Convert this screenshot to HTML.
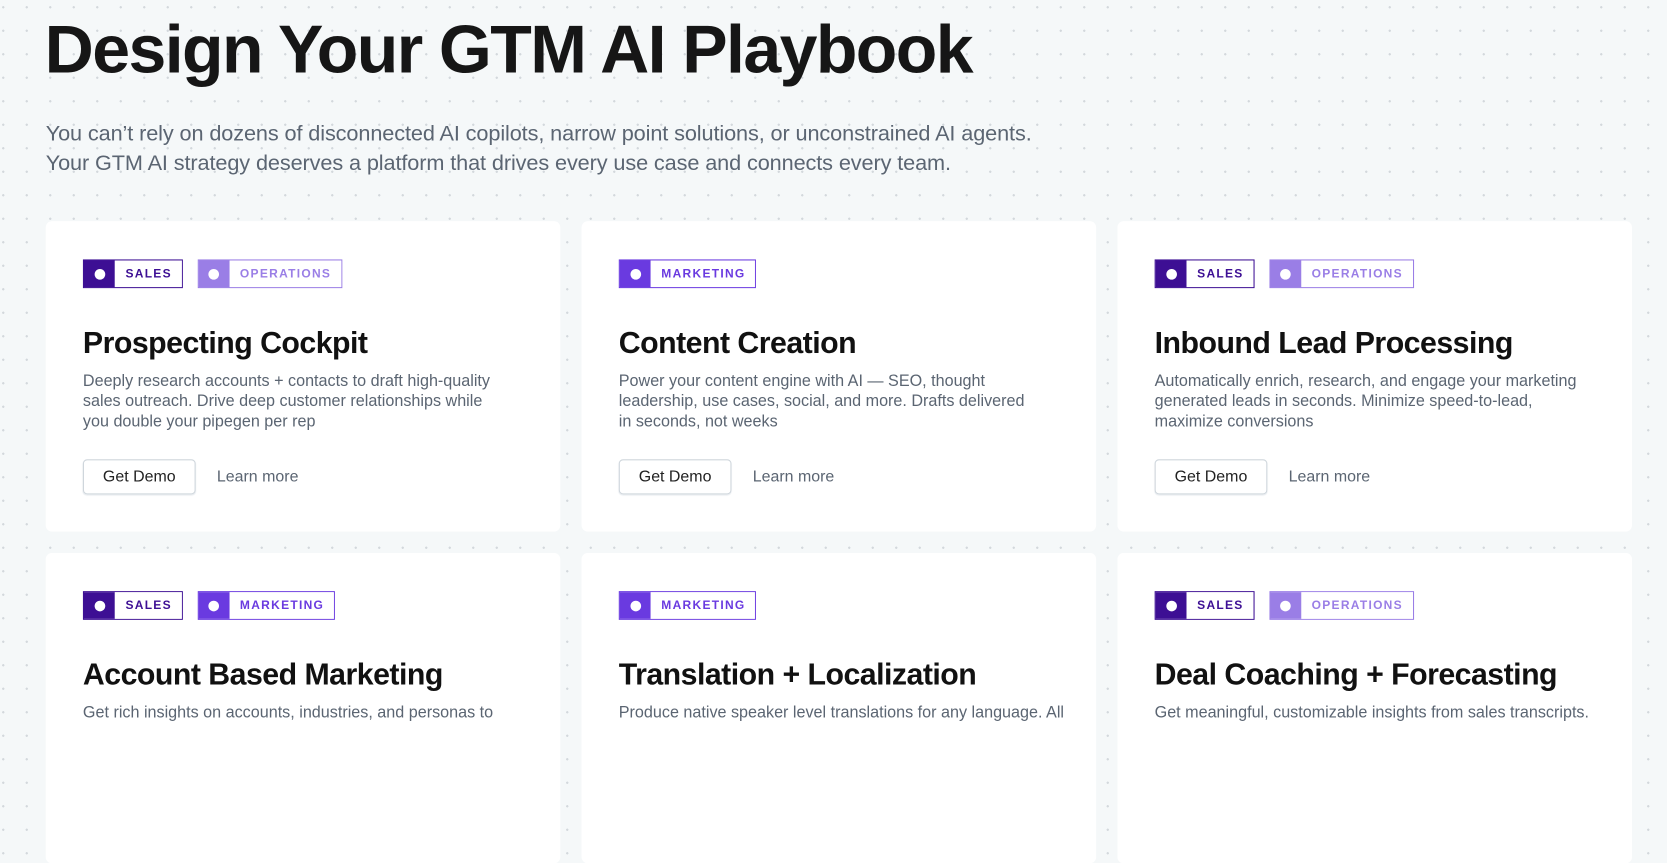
<!DOCTYPE html>
<html><head><meta charset="utf-8"><style>
*{box-sizing:border-box;margin:0;padding:0}
html,body{width:1667px;height:722px;overflow:hidden}
body{background-color:#f5f8f9;background-image:radial-gradient(circle,#d3d8dc 1px,transparent 1.3px);background-size:23.5px 23.5px;background-position:-8.5px -4.5px;font-family:"Liberation Sans",sans-serif;color:#111}
#w{position:absolute;left:0;top:0;width:1568px;height:680px;transform:scale(1.0632);transform-origin:0 0}
h1{position:absolute;left:42px;top:9px;font-size:64px;font-weight:700;letter-spacing:-1.5px;color:#161616}
.sub{position:absolute;left:43px;top:112px;font-size:20.4px;line-height:28px;color:#5b6572;letter-spacing:-.1px;white-space:nowrap}
.card{position:absolute;width:484px;height:292px;background:#fff;border-radius:6px;padding:36px 35px}
.tags{display:flex;gap:14px;height:27px}
.tag{display:flex;border:1px solid;height:27px;font-size:11.3px;font-weight:700;letter-spacing:1.2px}
.tag .sq{width:29px;display:flex;align-items:center;justify-content:center}
.tag .sq i{width:10px;height:10px;border-radius:50%;background:#fff;display:block}
.tag span{padding:1px 9px 0 10px;line-height:25px;background:#fff}
.s{border-color:#3d0f94;color:#3d0f94}.s .sq{background:#3d0f94}
.o{border-color:#9a7ee6;color:#9a7ee6}.o .sq{background:#9a7ee6}
.m{border-color:#6a3ae0;color:#6a3ae0}.m .sq{background:#6a3ae0}
h2{margin-top:36px;font-size:28.5px;font-weight:700;letter-spacing:-.5px;color:#111}
p{margin-top:9px;font-size:15.2px;line-height:19px;color:#5b6572;white-space:nowrap}
.btns{display:flex;align-items:center;margin-top:26px}
.btn{width:106px;height:33px;border:1px solid #cfd6dc;border-radius:4px;font-size:15px;color:#222;display:flex;align-items:center;justify-content:center;box-shadow:0 1px 1px #e6eaee}
.lm{margin-left:20px;font-size:15px;color:#5b6572}
</style></head><body><div id="w">
<h1>Design Your GTM AI Playbook</h1>
<div class="sub">You can’t rely on dozens of disconnected AI copilots, narrow point solutions, or unconstrained AI agents.<br>Your GTM AI strategy deserves a platform that drives every use case and connects every team.</div>

<div class="card" style="left:43px;top:208px"><div class="tags"><div class="tag s"><div class="sq"><i></i></div><span>SALES</span></div><div class="tag o"><div class="sq"><i></i></div><span>OPERATIONS</span></div></div>
<h2>Prospecting Cockpit</h2><p>Deeply research accounts + contacts to draft high-quality<br>sales outreach. Drive deep customer relationships while<br>you double your pipegen per rep</p>
<div class="btns"><div class="btn">Get Demo</div><div class="lm">Learn more</div></div></div>

<div class="card" style="left:547px;top:208px"><div class="tags"><div class="tag m"><div class="sq"><i></i></div><span>MARKETING</span></div></div>
<h2>Content Creation</h2><p>Power your content engine with AI — SEO, thought<br>leadership, use cases, social, and more. Drafts delivered<br>in seconds, not weeks</p>
<div class="btns"><div class="btn">Get Demo</div><div class="lm">Learn more</div></div></div>

<div class="card" style="left:1051px;top:208px"><div class="tags"><div class="tag s"><div class="sq"><i></i></div><span>SALES</span></div><div class="tag o"><div class="sq"><i></i></div><span>OPERATIONS</span></div></div>
<h2>Inbound Lead Processing</h2><p>Automatically enrich, research, and engage your marketing<br>generated leads in seconds. Minimize speed-to-lead,<br>maximize conversions</p>
<div class="btns"><div class="btn">Get Demo</div><div class="lm">Learn more</div></div></div>

<div class="card" style="left:43px;top:520px"><div class="tags"><div class="tag s"><div class="sq"><i></i></div><span>SALES</span></div><div class="tag m"><div class="sq"><i></i></div><span>MARKETING</span></div></div>
<h2>Account Based Marketing</h2><p>Get rich insights on accounts, industries, and personas to</p></div>

<div class="card" style="left:547px;top:520px"><div class="tags"><div class="tag m"><div class="sq"><i></i></div><span>MARKETING</span></div></div>
<h2>Translation + Localization</h2><p>Produce native speaker level translations for any language. All</p></div>

<div class="card" style="left:1051px;top:520px"><div class="tags"><div class="tag s"><div class="sq"><i></i></div><span>SALES</span></div><div class="tag o"><div class="sq"><i></i></div><span>OPERATIONS</span></div></div>
<h2>Deal Coaching + Forecasting</h2><p>Get meaningful, customizable insights from sales transcripts.</p></div>
</div></body></html>
